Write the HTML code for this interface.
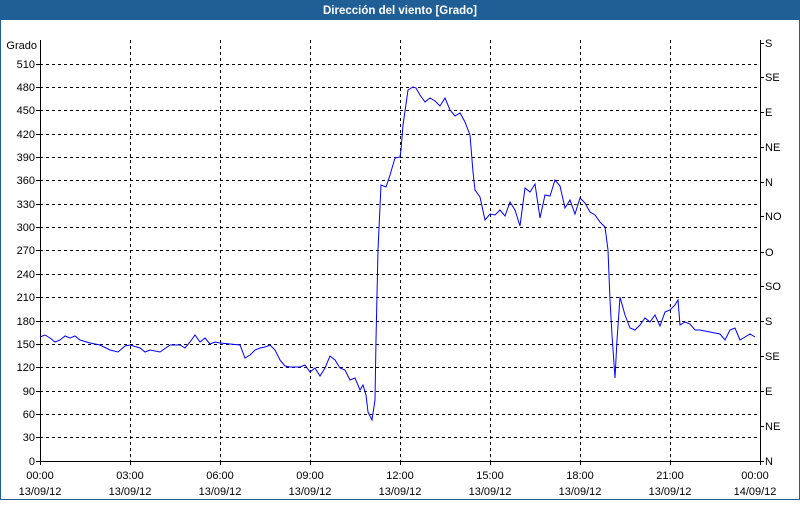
<!DOCTYPE html>
<html><head><meta charset="utf-8"><style>
html,body{margin:0;padding:0;background:#fff;}
body{width:800px;height:500px;overflow:hidden;font-family:"Liberation Sans","DejaVu Sans",sans-serif;}
</style></head><body>
<svg width="800" height="500" xmlns="http://www.w3.org/2000/svg" font-family="Liberation Sans, DejaVu Sans, sans-serif" font-size="11">
<rect x="0" y="0" width="800" height="500" fill="#fff"/>
<rect x="0.5" y="0.5" width="799" height="499" fill="none" stroke="#1f5f96"/>
<rect x="0" y="0" width="800" height="20" fill="#1f5f96"/>
<text x="400" y="14" fill="#fff" font-weight="bold" text-anchor="middle" font-size="11.5">Dirección del viento [Grado]</text>
<g stroke="#000" stroke-dasharray="3,3" stroke-width="1">
<path d="M130.5 40V461M220.5 40V461M310.5 40V461M400.5 40V461M490.5 40V461M580.5 40V461M670.5 40V461"/>
<path d="M40 64.5H760M40 87.5H760M40 110.5H760M40 134.5H760M40 157.5H760M40 180.5H760M40 204.5H760M40 227.5H760M40 250.5H760M40 274.5H760M40 297.5H760M40 321.5H760M40 344.5H760M40 367.5H760M40 391.5H760M40 414.5H760M40 437.5H760"/>
</g>
<g stroke="#000" fill="none">
<path d="M40.5 40V461.5H760.5V40"/>
<path d="M36 64.5h4M36 87.5h4M36 110.5h4M36 134.5h4M36 157.5h4M36 180.5h4M36 204.5h4M36 227.5h4M36 250.5h4M36 274.5h4M36 297.5h4M36 321.5h4M36 344.5h4M36 367.5h4M36 391.5h4M36 414.5h4M36 437.5h4M36 461.5h4"/>
<path d="M760 43.5h4M760 77.5h4M760 112.5h4M760 147.5h4M760 182.5h4M760 216.5h4M760 252.5h4M760 286.5h4M760 321.5h4M760 356.5h4M760 391.5h4M760 426.5h4M760 461.5h4"/>
<path d="M40.5 461v4M130.5 461v4M220.5 461v4M310.5 461v4M400.5 461v4M490.5 461v4M580.5 461v4M670.5 461v4M760.5 461v4"/>
</g>
<g text-anchor="end" fill="#000">
<text x="37" y="49">Grado</text>
<text x="35" y="68">510</text><text x="35" y="91">480</text><text x="35" y="114">450</text><text x="35" y="138">420</text><text x="35" y="161">390</text><text x="35" y="184">360</text><text x="35" y="208">330</text><text x="35" y="231">300</text><text x="35" y="254">270</text><text x="35" y="278">240</text><text x="35" y="301">210</text><text x="35" y="325">180</text><text x="35" y="348">150</text><text x="35" y="371">120</text><text x="35" y="395">90</text><text x="35" y="418">60</text><text x="35" y="441">30</text><text x="35" y="465">0</text>
</g>
<g fill="#000">
<text x="765" y="47">S</text><text x="765" y="81">SE</text><text x="765" y="116">E</text><text x="765" y="151">NE</text><text x="765" y="186">N</text><text x="765" y="220">NO</text><text x="765" y="256">O</text><text x="765" y="290">SO</text><text x="765" y="325">S</text><text x="765" y="360">SE</text><text x="765" y="395">E</text><text x="765" y="430">NE</text><text x="765" y="465">N</text>
</g>
<g text-anchor="middle" fill="#000">
<text x="40" y="479">00:00</text><text x="40" y="495">13/09/12</text>
<text x="130" y="479">03:00</text><text x="130" y="495">13/09/12</text>
<text x="220" y="479">06:00</text><text x="220" y="495">13/09/12</text>
<text x="310" y="479">09:00</text><text x="310" y="495">13/09/12</text>
<text x="400" y="479">12:00</text><text x="400" y="495">13/09/12</text>
<text x="490" y="479">15:00</text><text x="490" y="495">13/09/12</text>
<text x="580" y="479">18:00</text><text x="580" y="495">13/09/12</text>
<text x="670" y="479">21:00</text><text x="670" y="495">13/09/12</text>
<text x="755" y="479">00:00</text><text x="755" y="495">14/09/12</text>
</g>
<polyline fill="none" stroke="#0000ff" stroke-width="1" points="40,337 45,335 50,338 55,342 60,340 65,336 70,338 75,336 80,340 90,343 100,345 110,350 118,352 125,346 130,345 140,348 145,352 150,350 160,352 170,345 180,345 185,348 190,342 195,335 200,342 205,338 210,344 215,342 220,343 230,344 240,345 245,358 250,355 255,350 260,348 265,347 270,345 275,350 280,360 285,366 290,367 300,367 305,365 310,372 315,368 320,376 325,368 330,356 335,360 340,368 345,370 350,380 355,378 360,390 363,385 366,395 368,412 372,420 375,400 376,340 378,250 381,185 386,187 390,175 395,158 400,157 401,150 403,125 408,90 413,87 416,88 420,95 425,102 430,98 435,101 440,106 445,98 450,110 455,116 460,113 465,122 470,135 473,172 475,190 480,197 485,220 490,214 495,215 500,210 505,216 510,202 515,210 520,226 525,188 530,192 535,184 540,218 545,195 550,196 555,180 560,186 565,208 570,200 575,214 580,198 585,203 590,212 595,215 600,222 605,227 608,250 610,300 612,335 615,378 617,340 620,297 625,315 630,328 635,330 640,325 645,318 650,322 655,315 660,326 665,312 670,310 675,305 678,300 680,325 685,322 690,324 695,330 700,330 710,332 720,334 725,340 730,330 735,328 740,340 745,337 750,334 755,337"/>
</svg>
</body></html>
